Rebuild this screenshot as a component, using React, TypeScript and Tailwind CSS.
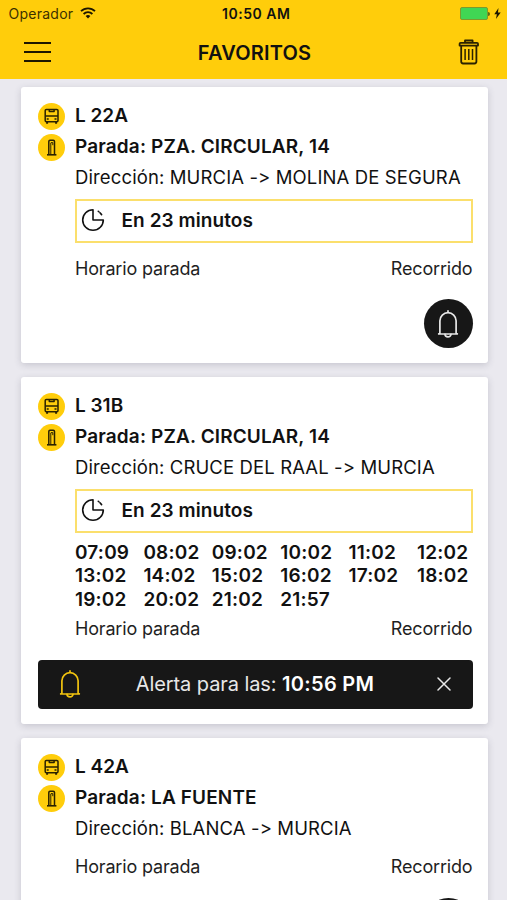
import { ReactNode } from "react";

type Stop = {
  line: string;
  stop: string;
  direction: string;
  wait?: string;
  times?: string[];
  alert?: string;
};

const stops: Stop[] = [
  {
    line: "L 22A",
    stop: "PZA. CIRCULAR, 14",
    direction: "MURCIA -> MOLINA DE SEGURA",
    wait: "En 23 minutos",
  },
  {
    line: "L 31B",
    stop: "PZA. CIRCULAR, 14",
    direction: "CRUCE DEL RAAL -> MURCIA",
    wait: "En 23 minutos",
    times: [
      "07:09", "08:02", "09:02", "10:02", "11:02", "12:02",
      "13:02", "14:02", "15:02", "16:02", "17:02", "18:02",
      "19:02", "20:02", "21:02", "21:57",
    ],
    alert: "10:56 PM",
  },
  {
    line: "L 42A",
    stop: "LA FUENTE",
    direction: "BLANCA -> MURCIA",
  },
];

const BellIcon = ({ className }: { className: string }) => (
  <svg
    viewBox="0 0 22 30"
    className={`w-[22px] h-[30px] ${className}`}
    fill="none"
    stroke="currentColor"
    strokeWidth="1.7"
    strokeLinecap="round"
    strokeLinejoin="round"
  >
    <path d="M11 1.8v1.9M2.9 24V11.8a8.1 8.1 0 0 1 16.2 0V24l1.2 1H1.7z" />
    <path d="M8 25.3a3 2.6 0 0 0 6 0" />
  </svg>
);

const BusIcon = () => (
  <svg
    viewBox="0 0 27 27"
    className="w-[27px] h-[27px]"
    fill="none"
    stroke="#2a2200"
    strokeWidth="1.5"
    strokeLinejoin="round"
  >
    <rect x="7.2" y="6.4" width="12.8" height="12.4" rx="1.2" />
    <path d="M7.2 13h12.8M11.3 6.5v2h4.8v-2M8.7 16h2M16.5 16h2" />
    <path d="M9.1 18.8v1.9M18.1 18.8v1.9" strokeWidth="2" />
  </svg>
);

const StopIcon = () => (
  <svg
    viewBox="0 0 27 27"
    className="w-[27px] h-[27px]"
    fill="none"
    stroke="#2a2200"
    strokeWidth="1.5"
    strokeLinejoin="round"
  >
    <path d="M10.8 20.5V7.4q0-1.2 1.2-1.2h3.3q1.2 0 1.2 1.2v13.1" />
    <path d="M12.8 20V9M12.8 8.6h2v2.6" strokeWidth="1" />
    <path d="M9 20.8h9.4" strokeWidth="1.6" />
  </svg>
);

const ClockIcon = () => (
  <svg
    viewBox="0 0 24 24"
    className="w-6 h-6 -mt-[2px]"
    fill="none"
    stroke="#111"
    strokeWidth="1.6"
    strokeLinecap="round"
  >
    <path d="M12 1.7a10.3 10.3 0 1 0 10.3 10.3H12z" strokeLinejoin="round" />
    <path d="M17.3 3.3l.5.4M19 4.8l1.6 1.8" />
  </svg>
);

const Badge = ({ children }: { children: ReactNode }) => (
  <div className="w-[27px] h-[27px] mr-[10.5px] shrink-0 rounded-full bg-[#ffcd0b]">
    {children}
  </div>
);

const StatusBar = () => (
  <div className="grid grid-cols-3 items-center h-7 pl-[8.5px] pr-[6px] text-[14px]">
    <div className="flex items-center gap-[7px] -mt-px">
      <span className="tracking-[0.25px] text-[#3c3000]">Operador</span>
      <svg viewBox="0 0 16 12" className="w-4 h-3 -mt-px" fill="none" stroke="#1c1600" strokeWidth="1.8">
        <path d="M1 4.2a10 10 0 0 1 14 0M3.6 7a6.3 6.3 0 0 1 8.8 0" />
        <path d="M8 11.5L5.6 9.1a3.4 3.4 0 0 1 4.8 0z" fill="#1c1600" stroke="none" />
      </svg>
    </div>
    <span className="-mt-px pl-[3px] text-center font-semibold tracking-[0.5px] whitespace-nowrap">10:50 AM</span>
    <div className="flex items-center justify-end -mt-px">
      <div className="w-7 h-[13px] rounded-[2px] border border-[#7d9a2c] bg-[#40d654]" />
      <div className="w-[2px] h-1 rounded-r bg-[#5c6a10]" />
      <svg viewBox="0 0 7 12" className="w-[7px] h-[11px] ml-1" fill="#1c1600">
        <path d="M4.6 0L0 6.8h2.8L1.8 12 7 4.8H4z" />
      </svg>
    </div>
  </div>
);

const Header = () => (
  <header className="h-[79px] shrink-0 bg-[#ffcd0b]">
    <StatusBar />
    <div className="flex items-center justify-between h-12 pl-6 pr-[27px]">
      <button className="flex flex-col gap-[7px] w-[27px]">
        <span className="h-[2px] bg-[#1c1600]" />
        <span className="h-[2px] bg-[#1c1600]" />
        <span className="h-[2px] bg-[#1c1600]" />
      </button>
      <h1 className="pt-px text-[20px] font-semibold tracking-[0.2px]">FAVORITOS</h1>
      <button>
        <svg viewBox="0 0 22 26" className="w-[22px] h-[26px] -mt-px" fill="none" stroke="#2a2200" strokeWidth="1.8" strokeLinejoin="round">
          <path d="M7 3.6V1.5h7.6v2.1M1.6 6.6V4.8q0-1 1-1h16.4q1 0 1 1v1.8z" />
          <path d="M3.2 6.6v16q0 1.9 1.9 1.9h11.4q1.9 0 1.9-1.9v-16" />
          <path d="M7.1 10v11M10.8 10v11M14.5 10v11" strokeWidth="1.5" />
        </svg>
      </button>
    </div>
  </header>
);

const StopCard = ({ item }: { item: Stop }) => (
  <section className="pl-[17px] pr-[15px] pt-[14px] pb-[15px] bg-white rounded-[3px] shadow-[0_2px_7px_rgba(60,60,80,0.2)]">
    <div className="flex items-center h-[31px] text-[19px] font-semibold">
      <Badge>
        <BusIcon />
      </Badge>
      <span className="-mt-px">{item.line}</span>
    </div>
    <div className="flex items-center h-[31px] text-[19px] font-semibold tracking-[0.14px] whitespace-nowrap">
      <Badge>
        <StopIcon />
      </Badge>
      <span className="-mt-px">Parada: {item.stop}</span>
    </div>
    <div className="pl-[37.5px]">
      {/* contextual alternates would merge "->" into an arrow */}
      <p className="h-[31px] leading-[29px] text-[18.5px] tracking-[0.12px] whitespace-nowrap [font-feature-settings:'calt'_0]">
        Dirección: {item.direction}
      </p>
      {item.wait && (
        <div className="flex items-center h-[44px] mt-[5px] mb-[3px] -ml-[0.5px] pl-[4.5px] border-2 border-[#fbdf6c]">
          <ClockIcon />
          <span className="ml-[16.5px] text-[19px] font-semibold tracking-[0.08px]">{item.wait}</span>
        </div>
      )}
      {item.times && (
        <div className="grid grid-cols-[repeat(6,68.4px)] pt-[5px] -mb-[4px] text-[19px] leading-[23.3px] font-semibold tracking-[0.2px]">
          {item.times.map((time) => (
            <span key={time}>{time}</span>
          ))}
        </div>
      )}
      <div className="flex items-center justify-between h-8 pt-[6px] box-content text-[18px] tracking-[-0.17px] text-[#1f1f1f]">
        <span>Horario parada</span>
        <span>Recorrido</span>
      </div>
    </div>
    {item.alert ? (
      <div className="flex items-center justify-between h-[49px] mt-[15px] pl-[21px] pr-[21px] rounded-[4px] bg-[#171717] text-[20px] tracking-[-0.08px] text-[#e8e8e8]">
        <BellIcon className="text-[#f2c40f]" />
        <span className="-ml-[8px]">
          Alerta para las:{" "}
          <b className="font-semibold tracking-[0.3px] text-white">{item.alert}</b>
        </span>
        <svg viewBox="0 0 14 14" className="w-[14px] h-[14px]" stroke="#e8e8e8" strokeWidth="1.5" strokeLinecap="round">
          <path d="M1 1l12 12M13 1L1 13" />
        </svg>
      </div>
    ) : (
      <div className="flex justify-end mt-[15px]">
        <button className="flex items-center justify-center w-[49px] h-[49px] rounded-full bg-[#171717]">
          <BellIcon className="text-[#e8e8e8]" />
        </button>
      </div>
    )}
  </section>
);

export default function App() {
  return (
    <div className="flex flex-col h-[900px] overflow-hidden bg-[#eae9ef] text-[#111] font-['Inter',sans-serif]">
      <Header />
      <main className="flex flex-col gap-[14px] pl-[20.5px] pr-[19.5px] pt-2">
        {stops.map((item) => (
          <StopCard key={item.line} item={item} />
        ))}
      </main>
    </div>
  );
}
